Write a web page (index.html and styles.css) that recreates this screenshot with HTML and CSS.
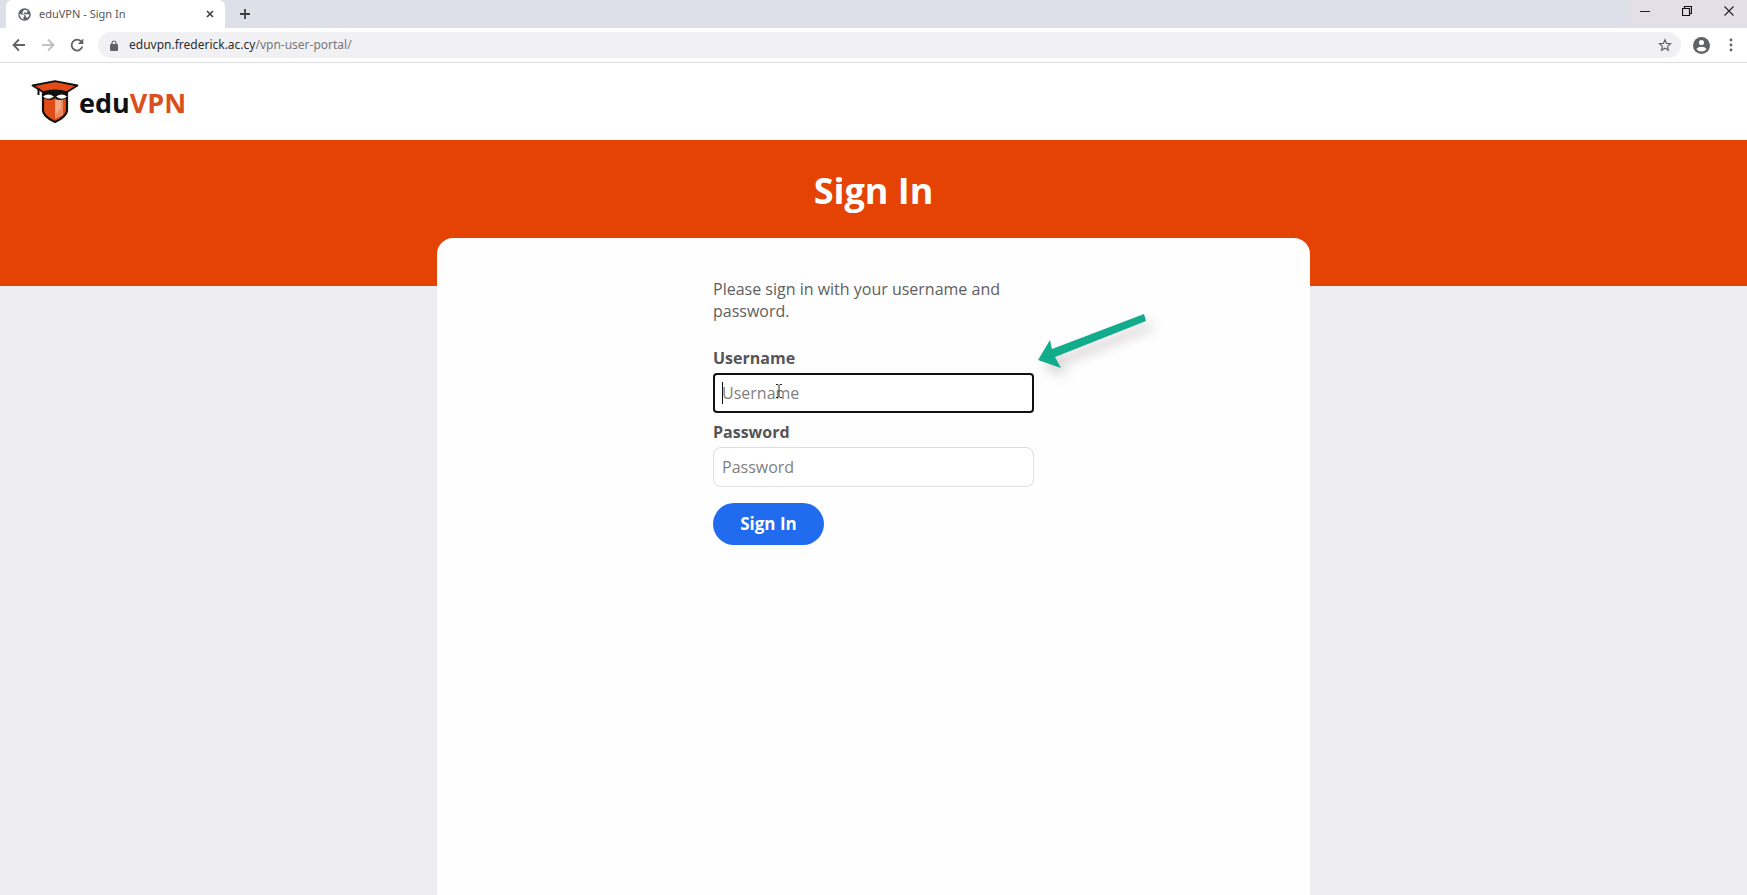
FILE: index.html
```html
<!DOCTYPE html>
<html lang="en">
<head>
  <meta charset="utf-8">
  <title>eduVPN - Sign In</title>
  <link rel="stylesheet" href="styles.css">
</head>
<body>
  <div class="browser">
    <div class="tab-strip">
      <div class="tab">
        <svg class="favicon" viewBox="0 0 24 24"><circle cx="12" cy="12" r="11.5" fill="#5f6368"/><path d="M2 11 L6 12 L10 12 L12 15 L10 17 V21 L6 19 Z M12 3 L18 5 L16 9 L12 8 L10 10 L14 12 L18 11 L21 13 L18 18 L15 17 L14 14 L8 10 L9 6 Z" fill="#fff"/></svg>
        <span class="tab-title">eduVPN - Sign In</span>
        <button type="button" class="icon-button" aria-label="Close tab">
          <svg width="8" height="8" viewBox="0 0 8 8"><path d="M1 1 L7 7 M7 1 L1 7" stroke="#3c4043" stroke-width="1.6"/></svg>
        </button>
      </div>
      <button type="button" class="icon-button new-tab" aria-label="New tab">
        <svg width="12" height="12" viewBox="0 0 12 12"><path d="M6 1 V11 M1 6 H11" stroke="#3c4043" stroke-width="1.8"/></svg>
      </button>
      <div class="window-buttons">
        <button type="button" class="icon-button" aria-label="Minimize">
          <svg width="10" height="10" viewBox="0 0 10 10"><path d="M0 5.5 H10" stroke="#222"/></svg>
        </button>
        <button type="button" class="icon-button" aria-label="Restore">
          <svg width="10" height="10" viewBox="0 0 10 10"><path d="M.5 2.5 H7.5 V9.5 H.5 Z M2.5 2.5 V.5 H9.5 V7.5 H7.5" fill="none" stroke="#111" stroke-width="1.2"/></svg>
        </button>
        <button type="button" class="icon-button" aria-label="Close">
          <svg width="10" height="10" viewBox="0 0 10 10"><path d="M.5 .5 L9.5 9.5 M9.5 .5 L.5 9.5" stroke="#222" stroke-width="1.1"/></svg>
        </button>
      </div>
    </div>

    <div class="toolbar">
      <div class="nav-buttons">
        <button type="button" class="icon-button" aria-label="Back">
          <svg width="14" height="14" viewBox="0 0 14 14"><path d="M13 7 H2 M7 1.5 L1.5 7 L7 12.5" fill="none" stroke="#5f6368" stroke-width="1.8"/></svg>
        </button>
        <button type="button" class="icon-button" aria-label="Forward">
          <svg width="14" height="14" viewBox="0 0 14 14"><path d="M1 7 H12 M7 1.5 L12.5 7 L7 12.5" fill="none" stroke="#bdc1c6" stroke-width="1.8"/></svg>
        </button>
        <button type="button" class="icon-button" aria-label="Reload">
          <svg width="14" height="14" viewBox="0 0 14 14"><path d="M11.5 4 A5.4 5.4 0 1 0 12.3 8.5" fill="none" stroke="#5f6368" stroke-width="1.8"/><path d="M13.3 .5 V6 H7.8 Z" fill="#5f6368"/></svg>
        </button>
      </div>
      <div class="address-bar">
        <svg width="8" height="11" viewBox="0 0 8 11"><path d="M2 5 V3 A2 2 0 0 1 6 3 V5" fill="none" stroke="#5f6368" stroke-width="1.2"/><rect y="4" width="8" height="7" rx="1" fill="#5f6368"/></svg>
        <span class="url">eduvpn.frederick.ac.cy<span class="url-path">/vpn-user-portal/</span></span>
        <button type="button" class="icon-button" aria-label="Bookmark">
          <svg width="14" height="14" viewBox="0 0 24 24"><path d="M12 3 L14.7 9.2 L21.5 9.8 L16.4 14.3 L17.9 21 L12 17.4 L6.1 21 L7.6 14.3 L2.5 9.8 L9.3 9.2 Z" fill="none" stroke="#5f6368" stroke-width="2"/></svg>
        </button>
      </div>
      <button type="button" class="icon-button" aria-label="Profile">
        <svg width="17" height="17" viewBox="0 0 20 20"><circle cx="10" cy="10" r="10" fill="#5f6368"/><circle cx="10" cy="6.5" r="3" fill="#fff"/><path d="M4 14 Q6 11.5 10 11.5 Q14 11.5 16 14 Q14 17 10 17 Q6 17 4 14 Z" fill="#fff"/></svg>
      </button>
      <button type="button" class="icon-button menu-button" aria-label="Menu">
        <svg width="4" height="14" viewBox="0 0 4 14"><g fill="#5f6368"><circle cx="2" cy="2" r="1.4"/><circle cx="2" cy="7" r="1.4"/><circle cx="2" cy="12" r="1.4"/></g></svg>
      </button>
    </div>
  </div>

  <header class="page-header">
    <a href="#" class="logo">
      <svg width="48" height="43" viewBox="0 0 48 43">
        <path d="M12 12 H36 V31 Q35 37 24 42 Q13 37 12 31 Z" fill="#e24a16" stroke="#111" stroke-width="2.2"/>
        <path d="M24 20 H32 V35 L24 39 Z" fill="#ef8a61"/>
        <path d="M24 20 H30 V28 L24 35 Z" fill="#f4aa88"/>
        <path d="M12 12 H36 V18 Q28 22 24 18 Q20 22 12 18 Z" fill="#111"/>
        <path d="M1.5 5.5 L24 1.2 L46.5 5.5 L36 12 Q24 9 12 12 Z" fill="#e24a16" stroke="#111" stroke-width="1.8" stroke-linejoin="round"/>
        <path d="M7.5 8 V15" stroke="#111" stroke-width="2"/>
        <path d="M12 16.500 Q17 12.500 23 16.500 Q17 21 12 16.500 Z M25 16.500 Q31 12.500 36 16.500 Q31 21 25 16.500 Z" fill="#fff"/>
      </svg>
      <span class="logo-text">edu<span class="logo-vpn">VPN</span></span>
    </a>
  </header>

  <div class="banner">
    <h1>Sign In</h1>
  </div>

  <main>
    <form>
      <p>Please sign in with your username and password.</p>
      <label for="username">Username</label>
      <div class="field">
        <input type="text" id="username" class="focused" placeholder="Username">
        <span class="caret"></span>
        <svg class="pointer" width="8" height="16" viewBox="0 0 8 16"><path d="M1 1.5 H3 L4 2.5 L5 1.5 H7 M4 2.5 V13.5 M1 14.5 H3 L4 13.5 L5 14.5 H7" fill="none" stroke="#222"/></svg>
        <svg class="arrow" width="130" height="64" viewBox="0 0 130 64"><path d="M3 47 L15 27 L17 36 L109 1 L111 8 L20 44 L26 55 Z" fill="#10ac8c"/></svg>
      </div>
      <label for="password">Password</label>
      <div class="field">
        <input type="password" id="password" placeholder="Password">
      </div>
      <button type="submit" class="sign-in">Sign In</button>
    </form>
  </main>
</body>
</html>
```
FILE: styles.css
```css
* {
  box-sizing: border-box;
}
body {
  margin: 0;
  min-height: 100vh;
  display: flex;
  flex-direction: column;
  background-color: #ededef;
  color: #555;
  font-family: "Open Sans", sans-serif;
  font-size: 16px;
  line-height: 22px;
}
svg {
  display: block;
}
.icon-button {
  padding: 0;
  border: none;
  background: none;
}

/* browser window */
.browser {
  background-color: #fff;
  border-bottom: 1px solid #dcdce0;
}
.tab-strip {
  display: flex;
  align-items: center;
  height: 28px;
  padding-left: 6px;
  background-color: #dee0e9;
}
.tab {
  display: flex;
  align-items: center;
  gap: 8px;
  width: 219px;
  height: 28px;
  padding: 0 11px 0 12px;
  background-color: #fff;
  border-radius: 6px 6px 0 0;
}
.favicon {
  width: 13px;
  height: 13px;
}
.tab-title {
  flex: 1;
  font-family: "Noto Sans", sans-serif;
  font-size: 11px;
}
.new-tab {
  margin-left: 14px;
}
.window-buttons {
  display: flex;
  align-items: center;
  gap: 32px;
  height: 28px;
  margin-left: auto;
  padding: 0 13px 6px;
  background-color: #e2e0e6;
}
.toolbar {
  display: flex;
  align-items: center;
  height: 34px;
  padding: 0 14px 0 12px;
}
.nav-buttons {
  display: flex;
  gap: 15px;
  margin-right: 14px;
}
.address-bar {
  flex: 1;
  display: flex;
  align-items: center;
  gap: 11px;
  height: 26px;
  margin-right: 12px;
  padding: 0 9px 0 12px;
  border-radius: 13px;
  background-color: #f1f1f4;
}
.url {
  flex: 1;
  color: #2b2c30;
  font-family: "Noto Sans", sans-serif;
  font-size: 12px;
}
.url-path {
  color: #77787c;
}
.menu-button {
  margin-left: 19px;
}

/* page */
.page-header {
  display: flex;
  align-items: center;
  height: 77px;
  padding: 0 31px;
  background-color: #fff;
}
.logo {
  display: flex;
  align-items: center;
  color: #111;
  text-decoration: none;
}
.logo-text {
  padding-top: 2px;
  font-size: 27px;
  font-weight: 700;
}
.logo-vpn {
  color: #d9501e;
}
.banner {
  height: 146px;
  background-color: #e54304;
}
h1 {
  margin: 0;
  padding-top: 26px;
  color: #fff;
  font-size: 36px;
  line-height: 50px;
  text-align: center;
}
main {
  flex: 1;
  width: 50%;
  margin: -48px auto 0;
  padding-top: 40px;
  background-color: #fefefe;
  border-radius: 16px 16px 0 0;
}
form {
  width: 321px;
  margin: 0 auto;
}
p {
  margin: 0 0 25px;
  color: #606060;
}
label {
  display: block;
  margin-bottom: 4px;
  font-weight: 700;
}
.field {
  position: relative;
  margin-bottom: 8px;
}
input {
  display: block;
  width: 100%;
  height: 40px;
  padding: 0 8px 1px;
  border: 1px solid #ddd;
  border-radius: 8px;
  background-color: #fff;
  color: #555;
  font: inherit;
}
input::placeholder {
  color: #808080;
}
.focused {
  padding: 0 7px 1px;
  border: 2px solid #111;
  border-radius: 4px;
}
.caret {
  position: absolute;
  top: 9px;
  left: 9px;
  width: 1px;
  height: 22px;
  background-color: #111;
}
.pointer {
  position: absolute;
  top: 10px;
  left: 62px;
}
.arrow {
  position: absolute;
  top: -60px;
  left: 322px;
  overflow: visible;
  filter: drop-shadow(6px 8px 6px rgba(60, 30, 50, 0.2));
}
.sign-in {
  display: block;
  width: 111px;
  height: 42px;
  margin-top: 16px;
  border: none;
  border-radius: 21px;
  background-color: #206bee;
  color: #fff;
  font: inherit;
  font-size: 17px;
  font-weight: 700;
}
```
